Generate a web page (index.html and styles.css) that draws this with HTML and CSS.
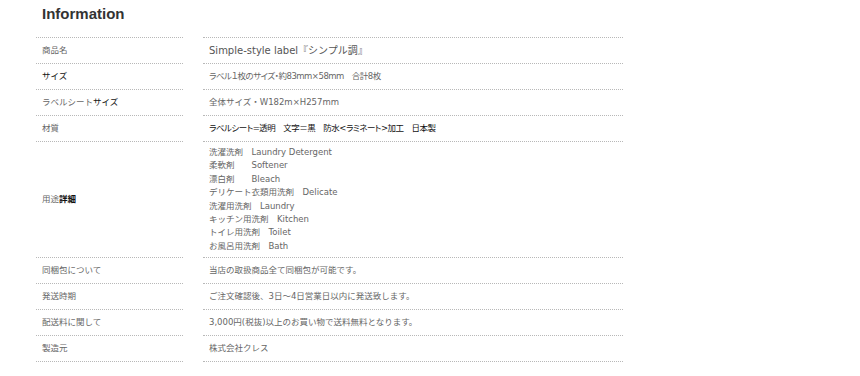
FILE: index.html
```html
<!DOCTYPE html>
<html lang="ja">
<head>
<meta charset="utf-8">
<title>Information</title>
<link rel="stylesheet" href="styles.css">
</head>
<body>
<section class="info">
  <h2 class="info-title">Information</h2>
  <dl class="spec">
    <div class="row first">
      <dt class="label">商品名</dt>
      <dd class="value value-lg">Simple-style label『シンプル調』</dd>
    </div>
    <div class="row">
      <dt class="label"><span class="dark">サイズ</span></dt>
      <dd class="value tight">ラベル１枚のサイズ・約83mm×58mm　合計8枚</dd>
    </div>
    <div class="row">
      <dt class="label">ラベルシート<span class="dark">サイズ</span></dt>
      <dd class="value">全体サイズ・W182m×H257mm</dd>
    </div>
    <div class="row">
      <dt class="label">材質</dt>
      <dd class="value dark tight">ラベルシート=透明　文字＝黒　防水&lt;ラミネート&gt;加工　日本製</dd>
    </div>
    <div class="row multi">
      <dt class="label">用途<b class="dark">詳細</b></dt>
      <dd class="value">
        <ul class="uses">
          <li>洗濯洗剤　Laundry Detergent</li>
          <li>柔軟剤　　Softener</li>
          <li>漂白剤　　Bleach</li>
          <li>デリケート衣類用洗剤　Delicate</li>
          <li>洗濯用洗剤　Laundry</li>
          <li>キッチン用洗剤　Kitchen</li>
          <li>トイレ用洗剤　Toilet</li>
          <li>お風呂用洗剤　Bath</li>
        </ul>
      </dd>
    </div>
    <div class="row">
      <dt class="label">同梱包について</dt>
      <dd class="value">当店の取扱商品全て同梱包が可能です。</dd>
    </div>
    <div class="row">
      <dt class="label">発送時期</dt>
      <dd class="value">ご注文確認後、3日～4日営業日以内に発送致します。</dd>
    </div>
    <div class="row">
      <dt class="label">配送料に関して</dt>
      <dd class="value">3,000円(税抜)以上のお買い物で送料無料となります。</dd>
    </div>
    <div class="row">
      <dt class="label">製造元</dt>
      <dd class="value">株式会社クレス</dd>
    </div>
  </dl>
</section>
</body>
</html>
```
FILE: styles.css
```css
html, body {
  margin: 0;
  padding: 0;
  background: #fff;
}

body {
  font-family: "DejaVu Sans", "Noto Sans CJK JP", sans-serif;
  font-size: 8.5px;
  color: #666;
}

.info {
  padding: 4px 0 0 36px;
}

.info-title {
  margin: 0 0 14px 6px;
  font-family: "Liberation Sans", Arial, sans-serif;
  font-size: 15px;
  line-height: 19px;
  font-weight: bold;
  color: #333;
}

.spec {
  margin: 0;
  padding: 0;
}

.row {
  display: grid;
  grid-template-columns: 147px 420px;
  column-gap: 20px;
}

.label,
.value {
  margin: 0;
  padding: 6px 6px;
  line-height: 13px;
  border-bottom: 1px dotted #b8b8b8;
}

.row.first .label,
.row.first .value {
  border-top: 1px dotted #b8b8b8;
}

.label {
  display: flex;
  align-items: center;
}

.value-lg {
  font-size: 10px;
  color: #555;
}

.tight {
  font-feature-settings: "palt";
  letter-spacing: -0.5px;
}

.dark {
  color: #111;
}

.row.multi .value {
  padding: 4px 6px;
}

.uses {
  list-style: none;
  margin: 0;
  padding: 0;
}

.uses li {
  line-height: 13.4px;
}
```
